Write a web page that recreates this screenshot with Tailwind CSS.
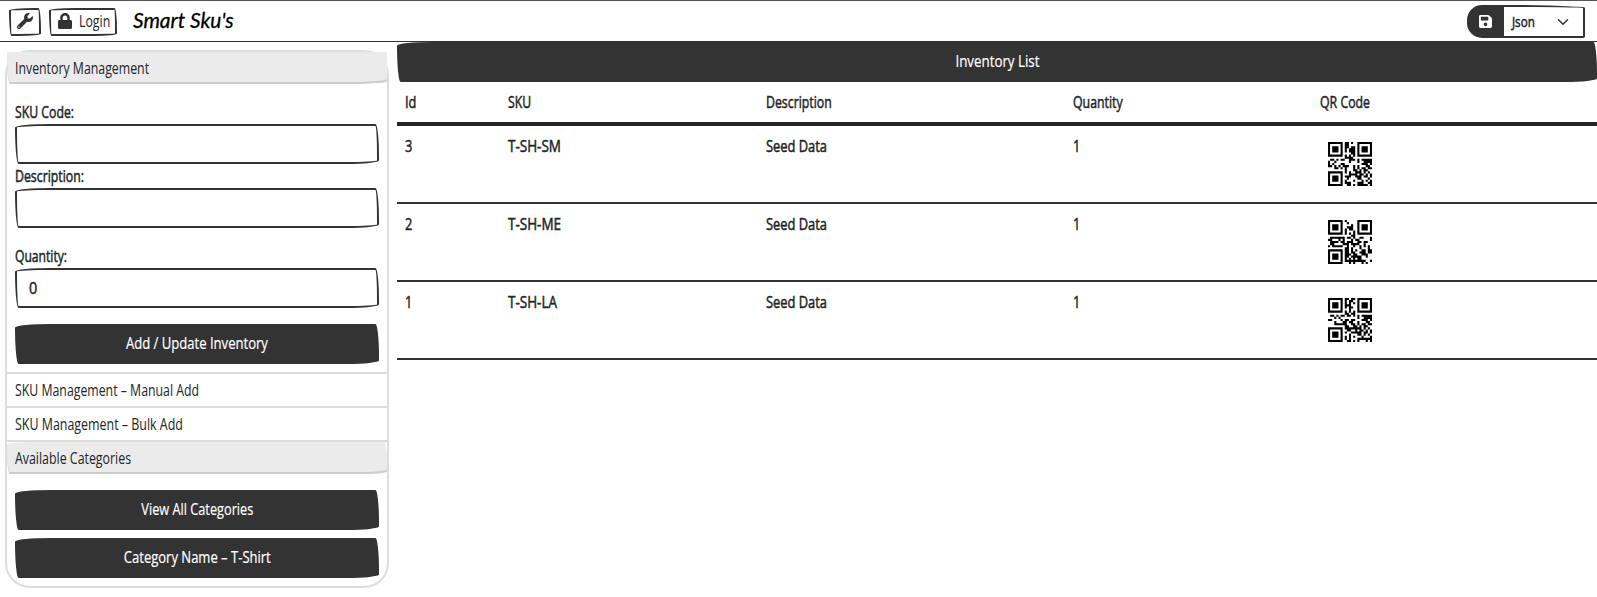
<!DOCTYPE html>
<html lang="en"><head><meta charset="utf-8"><title>Smart Sku's</title>
<script src="https://cdn.jsdelivr.net/npm/@tailwindcss/browser@4"></script>
</head>
<body class="bg-white font-['Open_Sans','Noto_Sans',sans-serif] text-[16px] leading-6 text-[#212529] h-[597px] overflow-hidden">
<nav class="h-[42px] border-t border-b border-t-[#555] border-b-[#333] flex items-center pl-[9px] pr-3">
  <button class="mt-px w-8 h-7 border-2 border-[#333] rounded-[255px_25px_225px_25px/25px_225px_25px_255px] flex items-center justify-center">
    <svg class="size-4 -mt-px" viewBox="0 0 512 512" fill="#333"><path d="M507.73 109.1c-2.24-9.03-13.54-12.09-20.12-5.51l-74.36 74.36-67.88-11.31-11.31-67.88 74.36-74.36c6.62-6.62 3.43-17.9-5.66-20.16-47.38-11.74-99.55.91-136.58 37.93-39.64 39.64-50.55 97.1-34.05 147.2L18.74 402.76c-24.99 24.99-24.99 65.51 0 90.5 24.99 24.99 65.51 24.99 90.5 0l213.21-213.21c50.12 16.71 107.47 5.68 147.37-34.22 37.07-37.07 49.7-89.32 37.91-136.73zM64 472c-13.25 0-24-10.75-24-24 0-13.26 10.75-24 24-24s24 10.74 24 24c0 13.25-10.75 24-24 24z"/></svg>
  </button>
  <button class="mt-px ml-2 w-[68px] h-7 border-2 border-[#333] rounded-[255px_25px_225px_25px/25px_225px_25px_255px] flex items-center pl-[7px]">
    <svg class="w-[14px] h-4 shrink-0 -mt-px" viewBox="0 0 448 512" fill="#333"><path d="M400 224h-24v-72C376 68.2 307.8 0 224 0S72 68.2 72 152v72H48c-26.5 0-48 21.5-48 48v192c0 26.500 21.500 48 48 48h352c26.500 0 48-21.500 48-48V272c0-26.500-21.500-48-48-48zm-104 0H152v-72c0-39.700 32.300-72 72-72s72 32.300 72 72v72z"/></svg>
    <span class="ml-[7px] -mt-px w-0 whitespace-nowrap text-left"><span class="inline-block origin-left scale-x-[.77]">Login</span></span>
  </button>
  <a class="ml-4 w-[110px] whitespace-nowrap"><span class="inline-block origin-left scale-x-[.95] font-['Lato',sans-serif] italic text-[22px] text-black [-webkit-text-stroke:.3px]">Smart Sku's</span></a>
  <div class="ml-auto mt-px h-[33px] w-[118px] flex">
    <div class="w-[37px] bg-[#333] rounded-l-[15px] flex items-center justify-center">
      <svg class="w-[13px] h-[15px]" viewBox="0 0 448 512" fill="#fff"><path d="M433.900 129.900l-83.900-83.900A48 48 0 0 0 316.100 32H48C21.500 32 0 53.500 0 80v352c0 26.500 21.500 48 48 48h352c26.500 0 48-21.500 48-48V163.900a48 48 0 0 0-14.100-34zM224 416c-35.300 0-64-28.700-64-64s28.700-64 64-64 64 28.700 64 64-28.700 64-64 64zm96-304.500V212c0 6.600-5.400 12-12 12H76c-6.600 0-12-5.400-12-12V108c0-6.600 5.400-12 12-12h228.500c3.200 0 6.200 1.300 8.500 3.500l3.500 3.500A12 12 0 0 1 320 111.500z"/></svg>
    </div>
    <div class="w-[81px] border-2 border-l-0 border-[#333] rounded-[0_80px_2px_0/0_3px_2px_0] flex items-center justify-between pl-2 pr-[14px]">
      <span class="inline-block w-6"><span class="inline-block origin-left scale-x-[.83] text-[14px] [-webkit-text-stroke:.5px]">Json</span></span>
      <svg class="size-[12px]" viewBox="0 0 16 16" fill="none" stroke="#333" stroke-width="2" stroke-linecap="round" stroke-linejoin="round"><path d="m2 5 6 6 6-6"/></svg>
    </div>
  </div>
</nav>
<main class="flex">
  <aside class="mt-2 ml-[5px] w-[384px] h-[538px] border-2 border-[#ddd] rounded-[25px] flex flex-col shrink-0">
    <h2 class="h-8 shrink-0 bg-[#ebebeb] shadow-[inset_0_-2px_0_#ccc] rounded-[2px_2px_36px_3px/2px_2px_3px_28px] pl-2 leading-8 whitespace-nowrap"><span class="inline-block origin-left scale-x-[.77]">Inventory Management</span></h2>
    <div class="px-2 h-[288px] shrink-0 pt-[15px] flex flex-col">
      <label class="h-6 mt-px"><span class="inline-block origin-left scale-x-[.766] [-webkit-text-stroke:.5px]">SKU Code:</span></label>
      <div class="h-10 shrink-0 border-2 border-[#333] rounded-[255px_25px_225px_25px/25px_225px_25px_255px]"></div>
      <label class="h-6"><span class="inline-block origin-left scale-x-[.77] [-webkit-text-stroke:.5px]">Description:</span></label>
      <div class="h-10 shrink-0 border-2 border-[#333] rounded-[255px_25px_225px_25px/25px_225px_25px_255px]"></div>
      <label class="h-6 mt-4"><span class="inline-block origin-left scale-x-[.758] [-webkit-text-stroke:.5px]">Quantity:</span></label>
      <div class="h-10 shrink-0 border-2 border-[#333] rounded-[255px_25px_225px_25px/25px_225px_25px_255px] pl-3 leading-9"><span class="inline-block origin-left scale-x-[.9] [-webkit-text-stroke:.5px]">0</span></div>
      <button class="mt-4 h-10 shrink-0 bg-[#333] text-white rounded-[255px_25px_225px_25px/25px_225px_25px_255px] pb-0.5"><span class="inline-block scale-x-[.817] [-webkit-text-stroke:.2px]">Add / Update Inventory</span></button>
    </div>
    <h2 class="h-[34px] shrink-0 border-t-2 border-[#ddd] pl-2 leading-8 whitespace-nowrap"><span class="inline-block origin-left scale-x-[.769]">SKU Management – Manual Add</span></h2>
    <h2 class="h-[34px] shrink-0 border-t-2 border-[#ddd] pl-2 leading-8 whitespace-nowrap"><span class="inline-block origin-left scale-x-[.777]">SKU Management – Bulk Add</span></h2>
    <div class="border-t-2 border-[#ddd]"><h2 class="h-[32px] bg-[#ebebeb] shadow-[inset_0_-2px_0_#ccc] rounded-[255px_25px_225px_25px/25px_225px_25px_255px] pl-2 leading-8 whitespace-nowrap"><span class="inline-block origin-left scale-x-[.773]">Available Categories</span></h2></div>
    <div class="px-2 pt-4 flex flex-col gap-2">
      <button class="h-10 bg-[#333] text-white rounded-[255px_25px_225px_25px/25px_225px_25px_255px] pb-0.5"><span class="inline-block scale-x-[.796] [-webkit-text-stroke:.2px]">View All Categories</span></button>
      <button class="h-10 bg-[#333] text-white rounded-[255px_25px_225px_25px/25px_225px_25px_255px] pb-0.5"><span class="inline-block scale-x-[.814] [-webkit-text-stroke:.2px]">Category Name – T-Shirt</span></button>
    </div>
  </aside>
  <section class="ml-2 flex-1">
    <h1 class="h-10 bg-[#333] text-white text-center leading-[39px] rounded-[255px_25px_225px_25px/25px_225px_25px_255px]"><span class="inline-block scale-x-[.833] [-webkit-text-stroke:.2px]">Inventory List</span></h1>
    <div class="grid grid-cols-[103px_258px_307px_247px_1fr] h-11 border-b-4 border-[#212529] leading-10 [-webkit-text-stroke:.5px] *:pl-2">
      <div><span class="inline-block origin-left scale-x-[.8]">Id</span></div>
      <div><span class="inline-block origin-left scale-x-[.761]">SKU</span></div>
      <div><span class="inline-block origin-left scale-x-[.77]">Description</span></div>
      <div><span class="inline-block origin-left scale-x-[.77]">Quantity</span></div>
      <div><span class="inline-block origin-left scale-x-[.77]">QR Code</span></div>
    </div>
    <div class="grid grid-cols-[103px_258px_307px_247px_1fr] h-[78px] border-b-2 border-[#333] leading-10 [-webkit-text-stroke:.5px] *:pl-2">
      <div><span class="inline-block origin-left scale-x-[.8]">3</span></div>
      <div><span class="inline-block origin-left scale-x-[.843]">T-SH-SM</span></div>
      <div><span class="inline-block origin-left scale-x-[.805]">Seed Data</span></div>
      <div><span class="inline-block origin-left scale-x-[.8]">1</span></div>
      <div class="pt-4"><svg class="ml-2 size-11" viewBox="0 0 21 21" data-sku="T-SH-SM" data-mask="0"></svg></div>
    </div>
    <div class="grid grid-cols-[103px_258px_307px_247px_1fr] h-[78px] border-b-2 border-[#333] leading-10 [-webkit-text-stroke:.5px] *:pl-2">
      <div><span class="inline-block origin-left scale-x-[.8]">2</span></div>
      <div><span class="inline-block origin-left scale-x-[.843]">T-SH-ME</span></div>
      <div><span class="inline-block origin-left scale-x-[.805]">Seed Data</span></div>
      <div><span class="inline-block origin-left scale-x-[.8]">1</span></div>
      <div class="pt-4"><svg class="ml-2 size-11" viewBox="0 0 21 21" data-sku="T-SH-ME" data-mask="2"></svg></div>
    </div>
    <div class="grid grid-cols-[103px_258px_307px_247px_1fr] h-[78px] border-b-2 border-[#333] leading-10 [-webkit-text-stroke:.5px] *:pl-2">
      <div><span class="inline-block origin-left scale-x-[.8]">1</span></div>
      <div><span class="inline-block origin-left scale-x-[.843]">T-SH-LA</span></div>
      <div><span class="inline-block origin-left scale-x-[.805]">Seed Data</span></div>
      <div><span class="inline-block origin-left scale-x-[.8]">1</span></div>
      <div class="pt-4"><svg class="ml-2 size-11" viewBox="0 0 21 21" data-sku="T-SH-LA" data-mask="0"></svg></div>
    </div>
  </section>
</main>
<script>
// Version 1-Q alphanumeric QR codes for the SKU cells
const CH='0123456789ABCDEFGHIJKLMNOPQRSTUVWXYZ $%*+-./:';
const EX=[],LG=[];
for(let i=0,x=1;i<255;i++){EX[i]=x;LG[x]=i;x<<=1;if(x>255)x^=285}
const mul=(a,b)=>a&&b?EX[(LG[a]+LG[b])%255]:0;
function ecc(d,n){
  let g=[1];
  for(let i=0;i<n;i++){const h=Array(g.length+1).fill(0);g.forEach((c,j)=>{h[j]^=c;h[j+1]^=mul(c,EX[i])});g=h}
  const r=d.concat(Array(n).fill(0));
  for(let i=0;i<d.length;i++){const c=r[i];if(c)g.forEach((v,j)=>r[i+j]^=mul(v,c))}
  return r.slice(d.length);
}
function qr(t,mask){
  const D=13;let b='';
  const put=(v,n)=>b+=v.toString(2).padStart(n,'0');
  put(2,4);put(t.length,9);
  for(let i=0;i<t.length;i+=2)i+1<t.length?put(CH.indexOf(t[i])*45+CH.indexOf(t[i+1]),11):put(CH.indexOf(t[i]),6);
  b+='0000';while(b.length%8)b+='0';
  const d=b.match(/.{8}/g).map(s=>parseInt(s,2));
  for(let k=0;d.length<D;k++)d.push(k%2?17:236);
  const bits=d.concat(ecc(d,26-D)).map(v=>v.toString(2).padStart(8,'0')).join('');
  const M=[...Array(21)].map(()=>Array(21).fill(null));
  for(const[a,c]of[[0,0],[0,14],[14,0]])for(let i=-1;i<8;i++)for(let j=-1;j<8;j++){
    const y=a+i,x=c+j;if(y<0||x<0||y>20||x>20)continue;
    const m=Math.max(Math.abs(i-3),Math.abs(j-3));M[y][x]=(m<4&&m!=2)?1:0;
  }
  for(let i=8;i<13;i++)M[6][i]=M[i][6]=1-i%2;
  let f=3<<3|mask,r=f;
  for(let i=0;i<10;i++)r=(r<<1)^((r>>9)*0x537);
  f=((f<<10)|r)^0x5412;
  const B=i=>f>>i&1;
  for(let i=0;i<6;i++)M[i][8]=B(i);
  M[7][8]=B(6);M[8][8]=B(7);M[8][7]=B(8);
  for(let i=9;i<15;i++)M[8][14-i]=B(i);
  for(let i=0;i<8;i++)M[8][20-i]=B(i);
  for(let i=8;i<15;i++)M[6+i][8]=B(i);
  M[13][8]=1;
  const flip={0:(y,x)=>(x+y)%2==0,2:(y,x)=>x%3==0}[mask];
  let k=0,up=true;
  for(let c=20;c>0;c-=2){
    if(c==6)c=5;
    for(let i=0;i<21;i++){const y=up?20-i:i;for(const x of[c,c-1])if(M[y][x]===null)M[y][x]=(+bits[k++])^(flip(y,x)?1:0)}
    up=!up;
  }
  return M;
}
document.querySelectorAll('[data-sku]').forEach(s=>{
  let p='';
  qr(s.dataset.sku,+s.dataset.mask).forEach((r,y)=>r.forEach((v,x)=>{if(v)p+=`M${x} ${y}h1v1h-1z`}));
  s.innerHTML=`<path d="${p}"/>`;
});
</script>
</body></html>
